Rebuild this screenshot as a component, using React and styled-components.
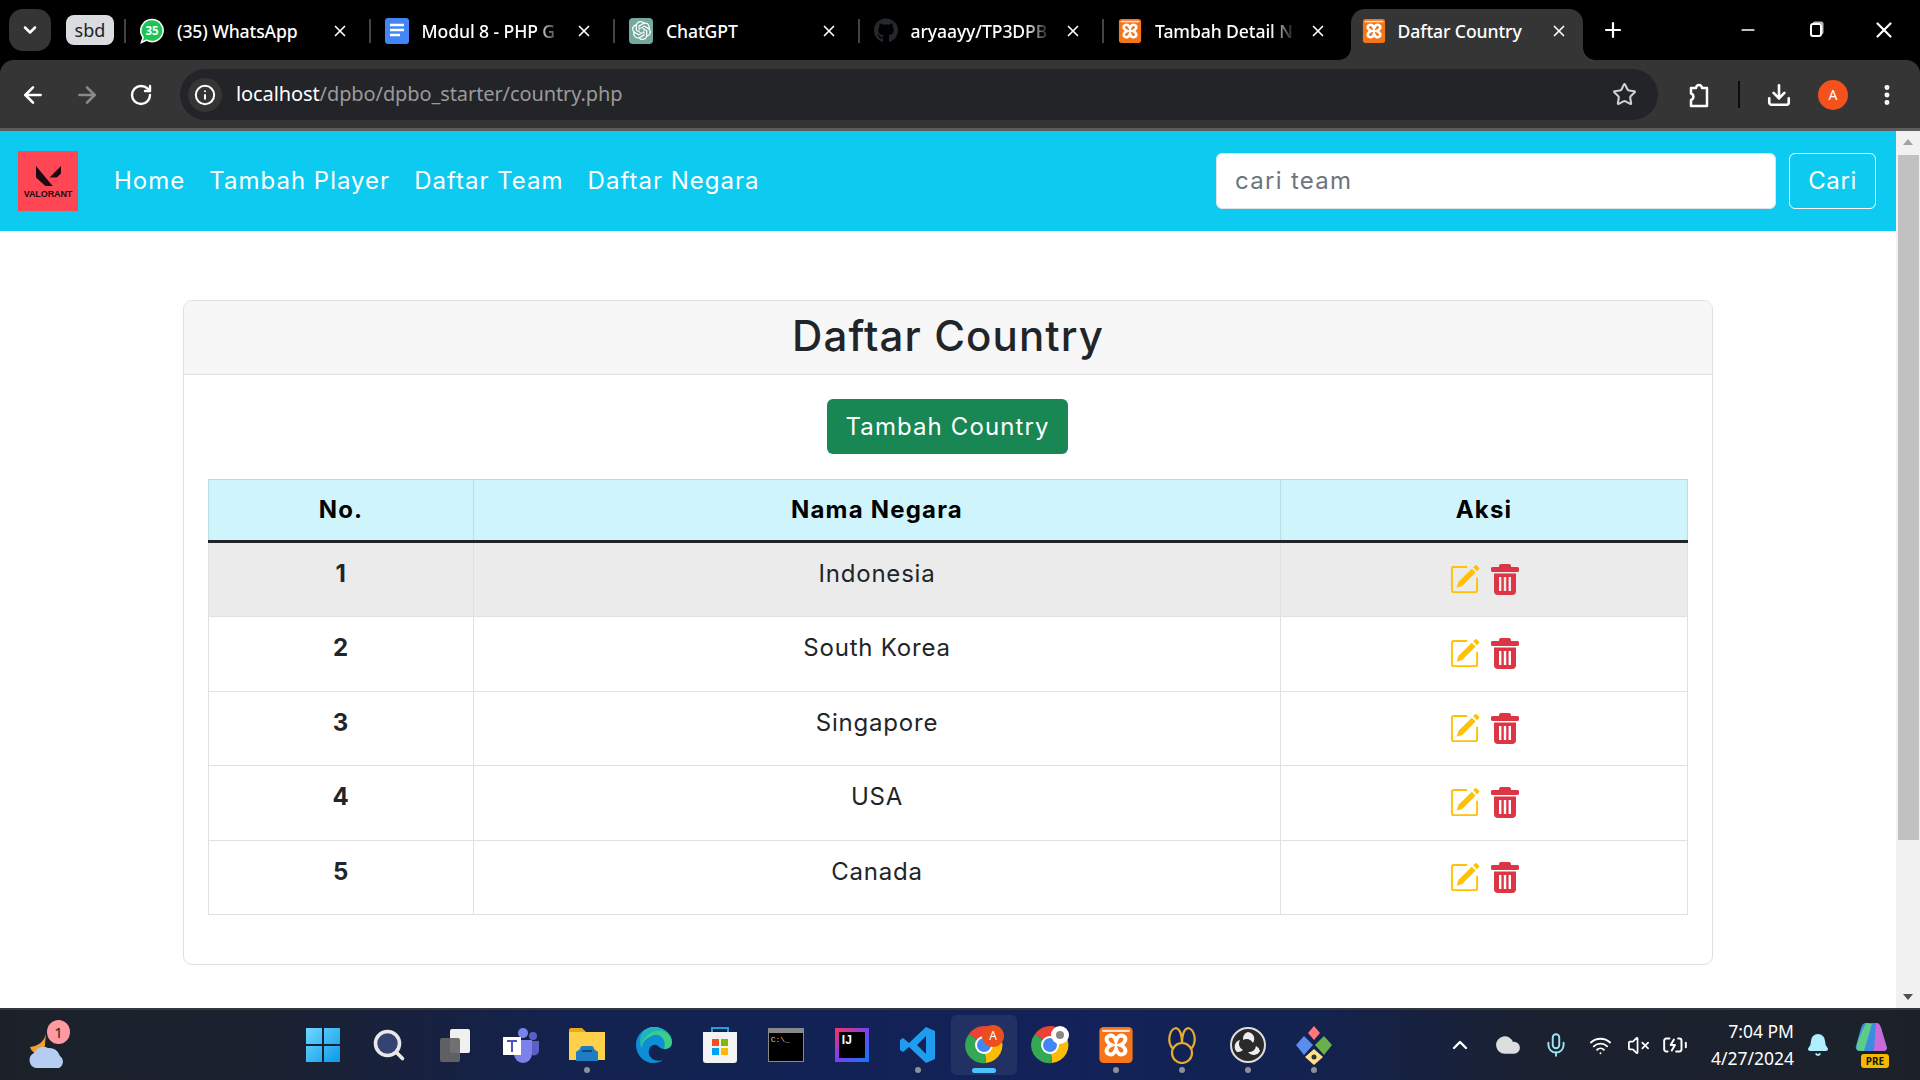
import React from "react";
import styled, { createGlobalStyle } from "styled-components";
import { ArrowLeft, ArrowRight, RotateCw, Star, Download, EllipsisVertical, ChevronDown, ChevronUp, X, Plus, Minus, Info, Search, Mic, Wifi, VolumeX, BatteryCharging, Bell, Cloud } from "lucide-react";
import { BsPencilSquare } from "react-icons/bs";
import { FaGithub } from "react-icons/fa";
import { SiOpenai } from "react-icons/si";

const Global = createGlobalStyle`
  html, body { margin: 0; padding: 0; background: #000; overflow: hidden; }
  * { box-sizing: border-box; }
`;
const Shell = styled.div`
  width: 1920px; height: 1080px; display: flex; flex-direction: column; overflow: hidden;
  font-family: "Noto Sans", sans-serif;
`;
const TabStrip = styled.div`
  height: 60px; background: #000; display: flex; color: #fff; flex: none;
`;
const TabMenu = styled.div`
  width: 42px; height: 42px; margin: 9px 15px 0 9px; border-radius: 14px; background: #353535;
  display: flex; align-items: center; justify-content: center;
`;
const GroupChip = styled.div`
  width: 48px; height: 30px; margin: 15px 10px 0 0; border-radius: 8px; background: #dadce0; color: #202124;
  display: flex; align-items: center; justify-content: center; font-size: 18px;
`;
const Tab = styled.div`
  width: 244.5px; height: 51px; margin-top: 9px; padding: 0 20px 8px 16px; display: flex; align-items: center; gap: 13px;
  position: relative; flex: none;
  &::before { content: ""; position: absolute; left: 0; top: 10px; height: 24px; width: 2px; background: #444; }
`;
const ActiveTab = styled.div`
  width: 232px; height: 51px; margin: 9px 0 0 4px; padding: 0 15px 8px 11px; display: flex; align-items: center; gap: 12px;
  background: #353535; border-radius: 14px 14px 0 0; position: relative; flex: none;
  &::before, &::after { content: ""; position: absolute; bottom: 0; width: 12px; height: 12px;
    background: radial-gradient(circle at var(--cx) 0, transparent 11.5px, #353535 12px); }
  &::before { left: -12px; --cx: 0; }
  &::after { right: -12px; --cx: 100%; }
`;
const FavSlot = styled.div`
  width: 24px; height: 26px; flex: none; display: flex; align-items: center; justify-content: center; border-radius: 4px;
  background: ${p => p.$bg || "transparent"}; color: ${p => p.$fg || "#fff"};
`;
const TabTitle = styled.div`
  flex: 1; min-width: 0; white-space: nowrap; overflow: hidden; font-size: 17.6px; font-weight: 500; letter-spacing: -0.1px;
  ${p => p.$fade && "mask-image: linear-gradient(90deg, #000 82%, transparent 100%);"}
`;
const TabClose = styled.div`
  width: 18px; height: 18px; display: flex; align-items: center; justify-content: center; flex: none;
`;
const NewTab = styled.div`
  margin: 9px 0 0 18px; width: 24px; height: 42px; display: flex; align-items: center; justify-content: center;
`;
const WinControls = styled.div`
  margin-left: auto; padding-right: 2px; display: flex;
`;
const WinButton = styled.div`
  width: 68px; height: 60px; display: flex; align-items: center; justify-content: center;
`;
const RestoreGlyph = styled.div`
  width: 12px; height: 14px; border: 2px solid #fff; border-radius: 3px; box-shadow: 2px -2px 0 -0.5px #bbb;
`;
const Toolbar = styled.div`
  height: 71px; flex: none; background: #353535; border-bottom: 3px solid #5c5c5c; border-radius: 14px 14px 0 0;
  padding: 9px 6px 0; display: flex; align-items: flex-start; color: #fff;
`;
const ToolButton = styled.div`
  width: 54px; height: 51px; flex: none; display: flex; align-items: center; justify-content: center;
  color: ${p => p.$dim ? "#8a8a8a" : "#fff"};
`;
const Omnibox = styled.div`
  flex: 1; height: 51px; margin: 0 14px 0 12px; border-radius: 26px; background: #232428; padding: 0 21px 0 8px;
  display: flex; align-items: center;
`;
const InfoChip = styled.div`
  width: 34px; height: 34px; border-radius: 50%; background: #353535; display: flex; align-items: center; justify-content: center; flex: none;
`;
const Url = styled.div`
  margin-left: 14px; font-size: 20px; color: #9a9a9a; flex: 1; letter-spacing: -0.1px; padding-bottom: 2px;
  b { color: #fff; font-weight: 400; }
`;
const ToolDivider = styled.div`
  width: 2px; height: 27px; margin: 12px 12px 0; background: #0b0b0b; flex: none;
`;
const Avatar = styled.div`
  width: 30px; height: 30px; border-radius: 50%; background: #f4511e; color: #fff; font-size: 14px;
  display: flex; align-items: center; justify-content: center;
`;
const Main = styled.div`
  flex: 1; min-height: 0; display: flex; background: #fff;
`;
const Page = styled.div`
  flex: 1; min-width: 0; display: flex; flex-direction: column;
  font-family: Inter, sans-serif; color: #212529;
`;
const Navbar = styled.nav`
  height: 100px; flex: none; background: #0dcaf0; display: flex; align-items: center; padding: 0 20px 0 18px;
`;
const Logo = styled.div`
  width: 60px; height: 60px; background: #ff4655; color: #1a0c10; display: flex; flex-direction: column; align-items: center;
  padding-top: 15px; flex: none;
`;
const LogoWord = styled.span`
  font: 700 9px "Liberation Sans", sans-serif; margin-top: 4px; letter-spacing: -0.1px; line-height: 9px;
`;
const NavLinks = styled.div`
  margin-left: 36px; display: flex; gap: 24px; padding-bottom: 2px;
`;
const NavLink = styled.a`
  font-size: 24px; color: #fff; letter-spacing: 1px; white-space: nowrap;
`;
const SearchForm = styled.form`
  margin-left: auto; display: flex; gap: 13px;
`;
const SearchInput = styled.input`
  width: 560px; height: 56px; border: 1px solid #dee2e6; border-radius: 6px; padding: 0 18px 2px; background: #fff;
  font: 24px Inter, sans-serif; color: #212529; letter-spacing: 1.3px;
  &::placeholder { color: #6c757d; opacity: 1; }
`;
const SearchButton = styled.button`
  width: 87px; height: 56px; border: 1.5px solid #fff; border-radius: 6px; background: transparent; color: #fff;
  font: 24px Inter, sans-serif; padding: 0 0 2px; letter-spacing: 0.6px;
`;
const Card = styled.section`
  width: 1530px; height: 665px; margin: 69px auto 0; border: 1.5px solid #dfe0e1; border-radius: 9px; overflow: hidden; flex: none;
`;
const CardHeader = styled.header`
  height: 74px; background: #f7f7f7; border-bottom: 1.5px solid #dfe0e1; display: flex; align-items: center; justify-content: center; padding-bottom: 2px;
`;
const Title = styled.h2`
  margin: 0; font-size: 42px; font-weight: 500; line-height: 1.2; letter-spacing: 1.1px;
`;
const CardBody = styled.div`
  padding: 24px; display: flex; flex-direction: column; align-items: center;
`;
const AddButton = styled.a`
  width: 241px; height: 55px; border-radius: 6px; background: #198754; color: #fff; font-size: 24px; letter-spacing: 1.1px;
  display: flex; align-items: center; justify-content: center; margin: 0 1px 25px 0;
`;
const Table = styled.table`
  width: 1479px; border-collapse: collapse; table-layout: fixed; font-size: 24px; line-height: 36px; letter-spacing: 0.8px;
`;
const HeadRow = styled.tr`
  background: #cff4fc; height: 62px;
`;
const Th = styled.th`
  border: 1.5px solid #badce3; border-bottom: 3px solid #212529; font-weight: 700; color: #000; padding: 0; text-align: center; letter-spacing: 1.2px;
  width: ${p => p.$w}px;
`;
const Row = styled.tr`
  height: 74.5px; background: ${p => p.$shade ? "#ebebeb" : "#fff"};
`;
const Td = styled.td`
  border: 1.5px solid #dee2e6; padding: 13px 12px 0; text-align: center; vertical-align: top;
  font-weight: ${p => p.$bold ? 700 : 400};
`;
const ActionCell = styled.td`
  border: 1.5px solid #dee2e6; padding: 0;
`;
const Actions = styled.div`
  display: flex; justify-content: center; align-items: center; gap: 11px; height: 73px; padding-right: 1px;
`;
const EditLink = styled.a` color: #ffc107; display: flex; `;
const DeleteLink = styled.a` color: #dc3545; display: flex; `;
const Scrollbar = styled.aside`
  width: 24px; flex: none; background: #f1f1f1; display: flex; flex-direction: column; align-items: center; justify-content: space-between;
  padding-top: 8px;
`;
const ArrowUp = styled.div`
  width: 0; height: 0; border: 5.5px solid transparent; border-top: 0; border-bottom: 6px solid #a3a3a3;
`;
const ArrowDown = styled.div`
  width: 0; height: 0; border: 5.5px solid transparent; border-bottom: 0; border-top: 6px solid #505050; margin-bottom: 8px;
`;
const Thumb = styled.div`
  width: 21px; height: 685px; background: #c1c1c1; margin-top: 10px;
`;
const ScrollSpacer = styled.div` flex: 1; `;
const Taskbar = styled.footer`
  height: 72px; flex: none; border-top: 2px solid #33363b; display: flex; align-items: center; position: relative;
  background: linear-gradient(90deg, #1c2129 0%, #1b2130 14%, #13224f 30%, #12225a 55%, #13224f 68%, #1b2130 80%, #1c2129 100%);
`;
const Weather = styled.div`
  width: 70px; height: 50px; margin-left: 22px; position: relative; flex: none;
`;
const WeatherBadge = styled.div`
  position: absolute; left: 25px; top: 0; width: 23px; height: 24px; border-radius: 50%; background: #ff9aa2; color: #222;
  font: 15px "Noto Sans", sans-serif; display: flex; align-items: center; justify-content: center;
`;
const Apps = styled.div`
  margin-left: 198px; display: flex; flex: none;
`;
const Slot = styled.div`
  width: 66.1px; flex: none; height: 60px; display: flex; align-items: center; justify-content: center; position: relative; border-radius: 6px;
  background: ${p => p.$active ? "rgba(255,255,255,0.07)" : "transparent"};
  &::after {
    content: ""; display: ${p => p.$dot || p.$active ? "block" : "none"}; position: absolute; bottom: 2px; left: 50%; transform: translateX(-50%);
    width: ${p => p.$active ? "24px" : "6px"}; height: ${p => p.$active ? "5px" : "6px"}; border-radius: 3px;
    background: ${p => p.$active ? "#4cc2ff" : "#8b8f98"};
  }
`;
const Tray = styled.div`
  margin-left: auto; display: flex; align-items: center; color: #fff;
`;
const TrayIcon = styled.div`
  width: ${p => p.$w || 48}px; display: flex; align-items: center; justify-content: center; color: ${p => p.$c || "#fff"};
`;
const Clock = styled.div`
  width: 96px; margin-left: 4px; text-align: right; color: #fff; font-size: 17.5px; line-height: 27px; font-family: "Noto Sans", sans-serif;
`;
const Copilot = styled.div`
  margin: 0 30px 0 12px; width: 36px; height: 46px; position: relative;
`;
const PreTag = styled.span`
  position: absolute; left: 7px; bottom: 0; width: 28px; height: 14px; border-radius: 3px; background: #f5b800; color: #111;
  font: 700 10px "Noto Sans", sans-serif; display: flex; align-items: center; justify-content: center;
`;
const TermBox = styled.div`
  width: 36px; height: 34px; background: #000; border: 1.5px solid #888; border-top-width: 5px; color: #ccc; font: 8px "Liberation Mono", monospace; padding: 2px;
`;
const IJBox = styled.div`
  width: 34px; height: 34px; padding: 4px; background: linear-gradient(135deg, #fe315d, #7b3ff2 50%, #087cfa); display: flex;
`;
const IJInner = styled.div`
  flex: 1; background: #000; color: #fff; font: 700 12px "Liberation Sans", sans-serif; padding: 2px 3px; line-height: 12px;
`;

const XamppIcon = ({ s = 24 }) => (
  <svg width={s} height={s} viewBox="0 0 24 26">
    <rect width="24" height="26" rx="3" fill="#f5761a" />
    <rect x="2" y="2" width="20" height="1.6" fill="#fff" opacity=".8" />
    <path d="M6 7c3-2 5 0 6 3 1-3 3-5 6-3 2 2 0 5-3 6 3 1 5 4 3 6-3 2-5 0-6-3-1 3-3 5-6 3-2-2 0-5 3-6-3-1-5-4-3-6z" fill="none" stroke="#fff" strokeWidth="2.8" />
  </svg>
);
const WhatsAppIcon = () => (
  <svg width="25" height="26" viewBox="0 0 25 26">
    <path d="M12.5 1a11.5 11.5 0 1 1-5.6 21.5L1.5 25l1.8-5.4A11.5 11.5 0 0 1 12.5 1z" fill="#1fc456" stroke="#fff" strokeWidth="1.6" />
    <text x="12.5" y="17" fontSize="12" fontWeight="700" fill="#fff" textAnchor="middle" fontFamily="Noto Sans">35</text>
  </svg>
);
const TrashIcon = () => (
  <svg width="28" height="31" viewBox="0 0 28 31" fill="currentColor">
    <path fillRule="evenodd" d="M10 0h8a2 2 0 0 1 2 2v1h6a2 2 0 0 1 0 5H2a2 2 0 0 1 0-5h6V2a2 2 0 0 1 2-2zM3 9.5h22V27a4 4 0 0 1-4 4H7a4 4 0 0 1-4-4zM8 13v14h2.4V13zM12.8 13v14h2.4V13zM17.6 13v14H20V13z" />
  </svg>
);
const ExtensionIcon = () => (
  <svg width="28" height="28" viewBox="0 0 28 28" fill="none" stroke="#fff" strokeWidth="2.5" strokeLinejoin="round">
    <path d="M6 7h5a3 3 0 0 1 6 0h5v18H6v-6a3.4 3.4 0 0 0 0-6.5z" />
  </svg>
);
const Tabs = [
  { t: "(35) WhatsApp", i: <WhatsAppIcon /> },
  { t: "Modul 8 - PHP G", i: <svg width="24" height="26" viewBox="0 0 24 26"><rect width="24" height="26" rx="3" fill="#4285f4" /><path d="M5 7h14M5 12h14M5 17h10" stroke="#fff" strokeWidth="2.4" /></svg>, fade: 1 },
  { t: "ChatGPT", i: <SiOpenai size={19} color="#fff" />, bg: "#74aa9c" },
  { t: "aryaayy/TP3DPB", i: <FaGithub size={25} color="#24292e" />, fade: 1 },
  { t: "Tambah Detail N", i: <XamppIcon />, fade: 1 },
];
const ChromeIcon = ({ children }) => (
  <svg width="40" height="40" viewBox="0 0 40 40">
    <path d="M20 20L5 9A18 18 0 0 1 36 11L20 11z" fill="#ea4335" />
    <path d="M20 20L36 11A18 18 0 0 1 22 38z" fill="#fbbc04" />
    <path d="M20 20L22 38A18 18 0 0 1 5 9z" fill="#34a853" />
    <circle cx="20" cy="20" r="9" fill="#fff" /><circle cx="20" cy="20" r="7" fill="#4285f4" />
    {children}
  </svg>
);
const apps = [
  { k: "start", n: <svg width="36" height="36" viewBox="0 0 36 36"><defs><linearGradient id="w" x1="0" y1="0" x2="1" y2="1"><stop offset="0" stopColor="#6fd8ff" /><stop offset="1" stopColor="#0a9ae8" /></linearGradient></defs><path d="M1 1h16v16H1zM19 1h16v16H19zM1 19h16v16H1zM19 19h16v16H19z" fill="url(#w)" /></svg> },
  { k: "search", n: <Search size={36} color="#e8e8e8" fill="#34436f" strokeWidth={2.4} /> },
  { k: "task", n: <svg width="36" height="36" viewBox="0 0 36 36"><rect x="13" y="2" width="20" height="24" rx="2" fill="#f0f0f0" /><rect x="3" y="11" width="20" height="24" rx="2" fill="#666" opacity=".92" /></svg> },
  { k: "teams", n: <svg width="38" height="36" viewBox="0 0 38 36"><circle cx="21" cy="6" r="5" fill="#7b83eb" /><circle cx="31" cy="9" r="4" fill="#5b5fc7" /><path d="M12 13h18v14a9 9 0 0 1-18 0z" fill="#7b83eb" /><path d="M30 14h7v10a5 5 0 0 1-7 4z" fill="#5b5fc7" /><rect x="1" y="10" width="18" height="18" fill="#fff" /><path d="M5 14h10M10 14v11" stroke="#4b53bc" strokeWidth="2" /></svg> },
  { k: "files", dot: 1, n: <svg width="38" height="36" viewBox="0 0 38 36"><path d="M1 3a2 2 0 0 1 2-2h11l4 4h18v28H1z" fill="#e8a91a" /><rect x="1" y="5" width="36" height="28" fill="#ffd04a" /><path d="M12 22a3 3 0 0 1 3-3h8a3 3 0 0 1 3 3l4 3v9H8v-9z" fill="#1f7dc4" /><rect x="14" y="23" width="10" height="2" fill="#0c4a80" /></svg> },
  { k: "edge", n: <svg width="38" height="38" viewBox="0 0 38 38"><path d="M19 1C9 1 1 9 1 19c0 10 8 18 17 18 4 0 8-1 10-3-8 3-16-3-14-10 1-5 7-7 10-3 3 3 13 4 13-5C37 8 29 1 19 1z" fill="#0d8fd8" /><path d="M19 1c8 0 18 7 18 15 0 5-4 7-8 7 3-8-3-16-10-14-6 2-12 6-12 13C2 9 10 1 19 1z" fill="#3dce84" /><path d="M19 1c6 0 12 3 15 8-5-5-14-6-20-1-4 3-7 7-8 14C3 10 10 1 19 1z" fill="#1db3c4" /></svg> },
  { k: "store", n: <svg width="36" height="38" viewBox="0 0 36 38"><path d="M10 8V2h16v6" fill="none" stroke="#1ba1e2" strokeWidth="2" /><path d="M1 6h34v28a3 3 0 0 1-3 3H4a3 3 0 0 1-3-3z" fill="#f3f3f3" /><rect x="10" y="13" width="7" height="7" fill="#f25022" /><rect x="19" y="13" width="7" height="7" fill="#7fba00" /><rect x="10" y="22" width="7" height="7" fill="#00a4ef" /><rect x="19" y="22" width="7" height="7" fill="#ffb900" /></svg> },
  { k: "term", n: <TermBox>C:\_</TermBox> },
  { k: "ij", n: <IJBox><IJInner>IJ</IJInner></IJBox> },
  { k: "code", dot: 1, n: <svg width="36" height="38" viewBox="0 0 36 38"><path d="M26 1l9 4v28l-9 4L9 21l-6 5-3-2v-10l3-2 6 5zM26 10l-9 9 9 9z" fill="#1f9cf0" fillRule="evenodd" /></svg> },
  { k: "chrome", active: 1, n: <ChromeIcon><circle cx="29" cy="11" r="11" fill="#ea4f1d" /><text x="29" y="15" fontSize="12" fill="#fff" textAnchor="middle" fontFamily="Noto Sans">A</text></ChromeIcon> },
  { k: "chrome2", n: <ChromeIcon><circle cx="30" cy="10" r="9" fill="#fff" /><circle cx="30" cy="10" r="4" fill="#888" /></ChromeIcon> },
  { k: "xampp", dot: 1, n: <XamppIcon s={36} /> },
  { k: "nb", dot: 1, n: <svg width="36" height="38" viewBox="0 0 36 38" fill="none" stroke="#e5ad2d" strokeWidth="2.2"><circle cx="18" cy="27" r="10" /><path d="M9 23C2 15 6 3 12 2c4 1 6 8 6 16M27 23c7-8 3-20-3-21-4 1-6 8-6 16" /></svg> },
  { k: "obs", dot: 1, n: <svg width="36" height="36" viewBox="0 0 36 36"><circle cx="18" cy="18" r="17" fill="#2a2a2a" stroke="#ddd" strokeWidth="2" /><path d="M18 5a7 7 0 0 1 5 11 7 7 0 0 0-10-3 7 7 0 0 1 5-8zM30 24a7 7 0 0 1-12 1 7 7 0 0 0 8-6 7 7 0 0 1 4 5zM7 25a7 7 0 0 1 3-12 7 7 0 0 0 3 10 7 7 0 0 1-6 2z" fill="#eee" /></svg> },
  { k: "fork", dot: 1, n: <svg width="38" height="40" viewBox="0 0 38 40"><path d="M19 1l6 7-6 7-6-7z" fill="#f77" /><path d="M9 11l9 9-9 10-8-10z" fill="#5b8def" /><path d="M29 11l8 9-8 10-9-10z" fill="#6ab04c" /><path d="M19 24l9 8-9 8-9-8z" fill="#ffe08a" /><circle cx="19" cy="32" r="2.5" fill="#333" /></svg> },
];
const rows = [["1", "Indonesia"], ["2", "South Korea"], ["3", "Singapore"], ["4", "USA"], ["5", "Canada"]];

export default function App() {
  return (
    <Shell>
      <Global />
      <TabStrip>
        <TabMenu><ChevronDown size={20} strokeWidth={3} /></TabMenu>
        <GroupChip>sbd</GroupChip>
        {Tabs.map(t => (
          <Tab key={t.t}>
            <FavSlot $bg={t.bg}>{t.i}</FavSlot>
            <TabTitle $fade={t.fade}>{t.t}</TabTitle>
            <TabClose><X size={18} strokeWidth={2.2} /></TabClose>
          </Tab>
        ))}
        <ActiveTab>
          <FavSlot><XamppIcon /></FavSlot>
          <TabTitle>Daftar Country</TabTitle>
          <TabClose><X size={18} strokeWidth={2.2} /></TabClose>
        </ActiveTab>
        <NewTab><Plus size={24} strokeWidth={2.2} /></NewTab>
        <WinControls>
          <WinButton><Minus size={20} /></WinButton>
          <WinButton><RestoreGlyph /></WinButton>
          <WinButton><X size={26} strokeWidth={2} /></WinButton>
        </WinControls>
      </TabStrip>
      <Toolbar>
        <ToolButton><ArrowLeft size={26} strokeWidth={2.4} /></ToolButton>
        <ToolButton $dim><ArrowRight size={26} strokeWidth={2.4} /></ToolButton>
        <ToolButton><RotateCw size={24} strokeWidth={2.4} /></ToolButton>
        <Omnibox>
          <InfoChip><Info size={22} strokeWidth={2.2} /></InfoChip>
          <Url><b>localhost</b>/dpbo/dpbo_starter/country.php</Url>
          <Star size={25} color="#d0d0d0" strokeWidth={2} />
        </Omnibox>
        <ToolButton><ExtensionIcon /></ToolButton>
        <ToolDivider />
        <ToolButton><Download size={26} strokeWidth={2.4} /></ToolButton>
        <ToolButton><Avatar>A</Avatar></ToolButton>
        <ToolButton><EllipsisVertical size={26} strokeWidth={2.6} /></ToolButton>
      </Toolbar>
      <Main>
        <Page>
          <Navbar>
            <Logo>
              <svg width="25" height="20" viewBox="0 0 24 19" fill="currentColor"><path d="M0 0v11l9 8h7zM24 0L13 11h7l4-4z" /></svg>
              <LogoWord>VALORANT</LogoWord>
            </Logo>
            <NavLinks>
              <NavLink>Home</NavLink>
              <NavLink>Tambah Player</NavLink>
              <NavLink>Daftar Team</NavLink>
              <NavLink>Daftar Negara</NavLink>
            </NavLinks>
            <SearchForm>
              <SearchInput placeholder="cari team" />
              <SearchButton type="button">Cari</SearchButton>
            </SearchForm>
          </Navbar>
          <Card>
            <CardHeader><Title>Daftar Country</Title></CardHeader>
            <CardBody>
              <AddButton>Tambah Country</AddButton>
              <Table>
                <thead>
                  <HeadRow><Th $w={265}>No.</Th><Th $w={807}>Nama Negara</Th><Th $w={407}>Aksi</Th></HeadRow>
                </thead>
                <tbody>
                  {rows.map(([n, name], i) => (
                    <Row key={n} $shade={i === 0}>
                      <Td $bold>{n}</Td>
                      <Td>{name}</Td>
                      <ActionCell>
                        <Actions>
                          <EditLink><BsPencilSquare size={31} /></EditLink>
                          <DeleteLink><TrashIcon /></DeleteLink>
                        </Actions>
                      </ActionCell>
                    </Row>
                  ))}
                </tbody>
              </Table>
            </CardBody>
          </Card>
        </Page>
        <Scrollbar>
          <ArrowUp />
          <Thumb />
          <ScrollSpacer />
          <ArrowDown />
        </Scrollbar>
      </Main>
      <Taskbar>
        <Weather>
          <svg width="40" height="36" viewBox="0 0 40 36" style={{ marginTop: 14, marginLeft: 6 }}>
            <path d="M18 0C16 8 10 12 2 13c2 6 8 9 14 7z" fill="#f0a030" />
            <path d="M8 34a8 8 0 0 1-2-15 10 10 0 0 1 14-5 11 11 0 0 1 12 8 7 7 0 0 1-1 12z" fill="#b4cdf0" />
          </svg>
          <WeatherBadge>1</WeatherBadge>
        </Weather>
        <Apps>
          {apps.map(a => <Slot key={a.k} $dot={a.dot} $active={a.active}>{a.n}</Slot>)}
        </Apps>
        <Tray>
          <TrayIcon><ChevronUp size={24} strokeWidth={2.4} /></TrayIcon>
          <TrayIcon><Cloud size={26} fill="#ddd" color="#ddd" /></TrayIcon>
          <TrayIcon $c="#9be4f5"><Mic size={26} strokeWidth={1.8} /></TrayIcon>
          <TrayIcon $w={40}><Wifi size={23} /></TrayIcon>
          <TrayIcon $w={36}><VolumeX size={23} strokeWidth={1.8} /></TrayIcon>
          <TrayIcon $w={38}><BatteryCharging size={26} strokeWidth={1.8} /></TrayIcon>
          <Clock>7:04 PM<br />4/27/2024</Clock>
          <TrayIcon $w={48} $c="#aeeeff"><Bell size={24} fill="#aeeeff" /></TrayIcon>
          <Copilot>
            <svg width="34" height="36" viewBox="0 0 34 36"><path d="M12 1h10c3 0 4 2 5 5l6 20c0 2-2 3-4 3H6c-3 0-5-2-4-5l5-18c1-3 2-5 5-5z" fill="#3d8be0" /><path d="M22 1c3 0 4 2 5 5l6 20c0 2-2 3-4 3h-9z" fill="#c86ad8" /><path d="M3 22C5 14 9 8 12 1l6 1-8 27H6c-3 0-4-3-3-7z" fill="#5ccb8c" /></svg>
            <PreTag>PRE</PreTag>
          </Copilot>
        </Tray>
      </Taskbar>
    </Shell>
  );
}
